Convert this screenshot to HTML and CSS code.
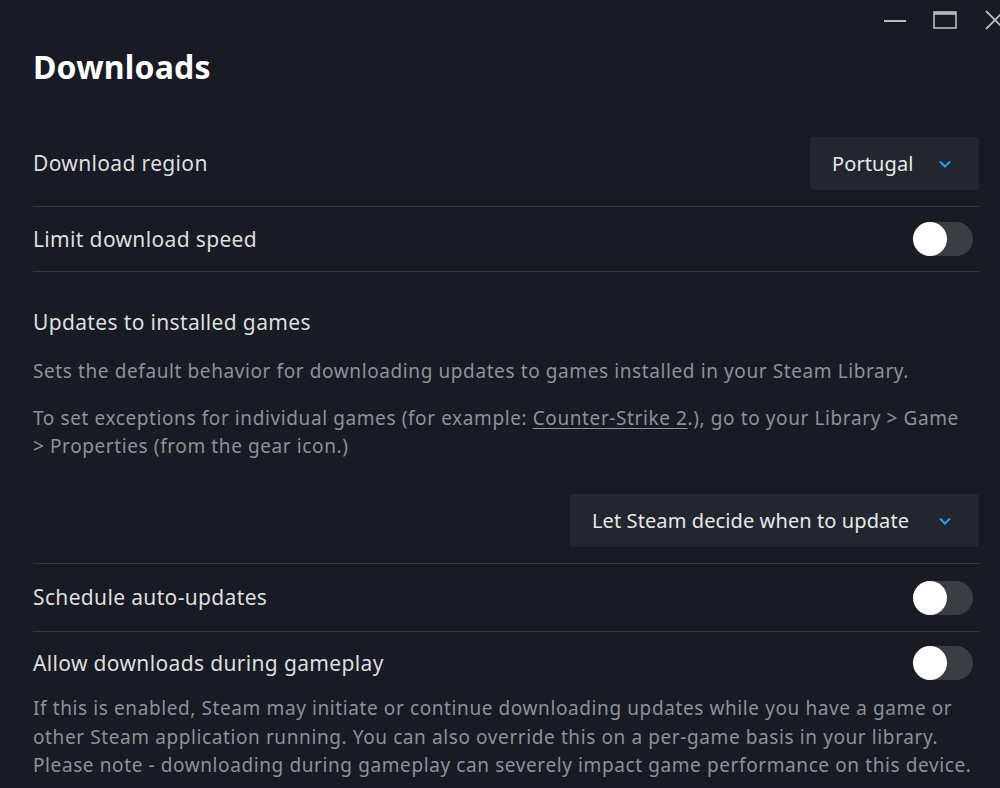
FILE: index.html
```html
<!DOCTYPE html>
<html>
<head>
<meta charset="utf-8">
<link rel="stylesheet" href="styles.css">
</head>
<body>
<div class="titlebar">
  <span class="wc"><svg width="24" height="24" viewBox="0 0 24 24"><line x1="1" y1="13" x2="23" y2="13" stroke="#b8bcc2" stroke-width="2"/></svg></span>
  <span class="wc"><svg width="24" height="24" viewBox="0 0 24 24"><rect x="1" y="4" width="22" height="16" fill="none" stroke="#b8bcc2" stroke-width="1.6"/><line x1="1" y1="5.5" x2="23" y2="5.5" stroke="#b8bcc2" stroke-width="2.5"/></svg></span>
  <span class="wc"><svg width="24" height="24" viewBox="0 0 24 24"><path d="M3 3 L21 21 M21 3 L3 21" stroke="#b8bcc2" stroke-width="1.8"/></svg></span>
</div>
<main class="page">
  <h1 class="title">Downloads</h1>

  <div class="row row-region">
    <span class="label">Download region</span>
    <div class="dropdown dd-small"><span>Portugal</span><svg class="chev" width="14" height="10" viewBox="0 0 14 10"><path d="M2 2.5 L7 7.5 L12 2.5" fill="none" stroke="#1a9fff" stroke-width="2"/></svg></div>
  </div>

  <div class="row row-toggle">
    <span class="label">Limit download speed</span>
    <span class="toggle"><span class="knob"></span></span>
  </div>

  <section class="section">
    <div class="label">Updates to installed games</div>
    <p class="desc p1">Sets the default behavior for downloading updates to games installed in your Steam Library.</p>
    <p class="desc p2">To set exceptions for individual games (for example: <u>Counter-Strike 2</u>.), go to your Library &gt; Game &gt;&nbsp;Properties (from the gear icon.)</p>
    <div class="dd-wrap">
      <div class="dropdown dd-wide"><span>Let Steam decide when to update</span><svg class="chev" width="14" height="10" viewBox="0 0 14 10"><path d="M2 2.5 L7 7.5 L12 2.5" fill="none" stroke="#1a9fff" stroke-width="2"/></svg></div>
    </div>
  </section>

  <div class="row row-toggle row-sched">
    <span class="label">Schedule auto-updates</span>
    <span class="toggle"><span class="knob"></span></span>
  </div>

  <div class="row-last">
    <div class="row-head">
      <span class="label">Allow downloads during gameplay</span>
      <span class="toggle"><span class="knob"></span></span>
    </div>
    <p class="desc p3">If this is enabled, Steam may initiate or continue downloading updates while you have a game or other Steam application running. You can also override this on a per-game basis in your library. Please note - downloading during gameplay can severely impact game performance on this device.</p>
  </div>
</main>
</body>
</html>
```
FILE: styles.css
```css
* { box-sizing: border-box; }
html, body { margin: 0; padding: 0; }
body {
  background: #181b23;
  color: #dcdedf;
  font-family: "Noto Sans", "Open Sans", sans-serif;
  width: 1000px;
  height: 788px;
  overflow: hidden;
  position: relative;
}
.titlebar {
  position: absolute;
  top: 8px;
  right: -7px;
  display: flex;
  gap: 26px;
}
.wc { display: block; width: 24px; height: 24px; }
.wc svg { display: block; }
.page {
  padding: 44px 21px 0 33px;
}
.title {
  margin: 0;
  font-size: 32px;
  font-weight: 700;
  color: #ffffff;
  line-height: 46px;
  letter-spacing: 0.2px;
}
.label {
  font-size: 21px;
  line-height: 29px;
  letter-spacing: 0.35px;
  color: #dcdedf;
}
.row {
  display: flex;
  align-items: center;
  justify-content: space-between;
  border-bottom: 1px solid #33363d;
}
.row-region {
  margin-top: 47px;
  padding-bottom: 16px;
}
.row-toggle {
  height: 65px;
}
.dropdown {
  display: flex;
  align-items: center;
  justify-content: space-between;
  background: #23262e;
  border-radius: 3px;
  height: 53px;
  font-size: 20px;
  letter-spacing: 0.1px;
  color: #e6e8ea;
  padding: 0 27px 0 22px;
}
.dd-small { width: 169px; }
.dd-wide { width: 409px; }
.chev { display: block; }
.toggle {
  width: 60px;
  height: 34px;
  border-radius: 17px;
  background: #3a3d44;
  position: relative;
  margin-right: 6px;
}
.knob {
  position: absolute;
  left: 0;
  top: 0;
  width: 34px;
  height: 34px;
  border-radius: 50%;
  background: #ffffff;
}
.section {
  padding-top: 36px;
  padding-bottom: 16px;
  border-bottom: 1px solid #33363d;
}
.desc {
  margin: 0;
  font-size: 19px;
  line-height: 28px;
  letter-spacing: 0.6px;
  color: #8b929a;
}
.p1 { margin-top: 20px; }
.p2 { margin-top: 19px; }
.p2 u { text-decoration-color: #8b929a; text-underline-offset: 3px; }
.dd-wrap {
  display: flex;
  justify-content: flex-end;
  margin-top: 34px;
}
.row-sched { height: 68px; }
.row-last { padding-top: 14px; }
.row-head {
  display: flex;
  align-items: center;
  justify-content: space-between;
  height: 34px;
}
.p3 { margin-top: 14px; line-height: 28.5px; }
```
